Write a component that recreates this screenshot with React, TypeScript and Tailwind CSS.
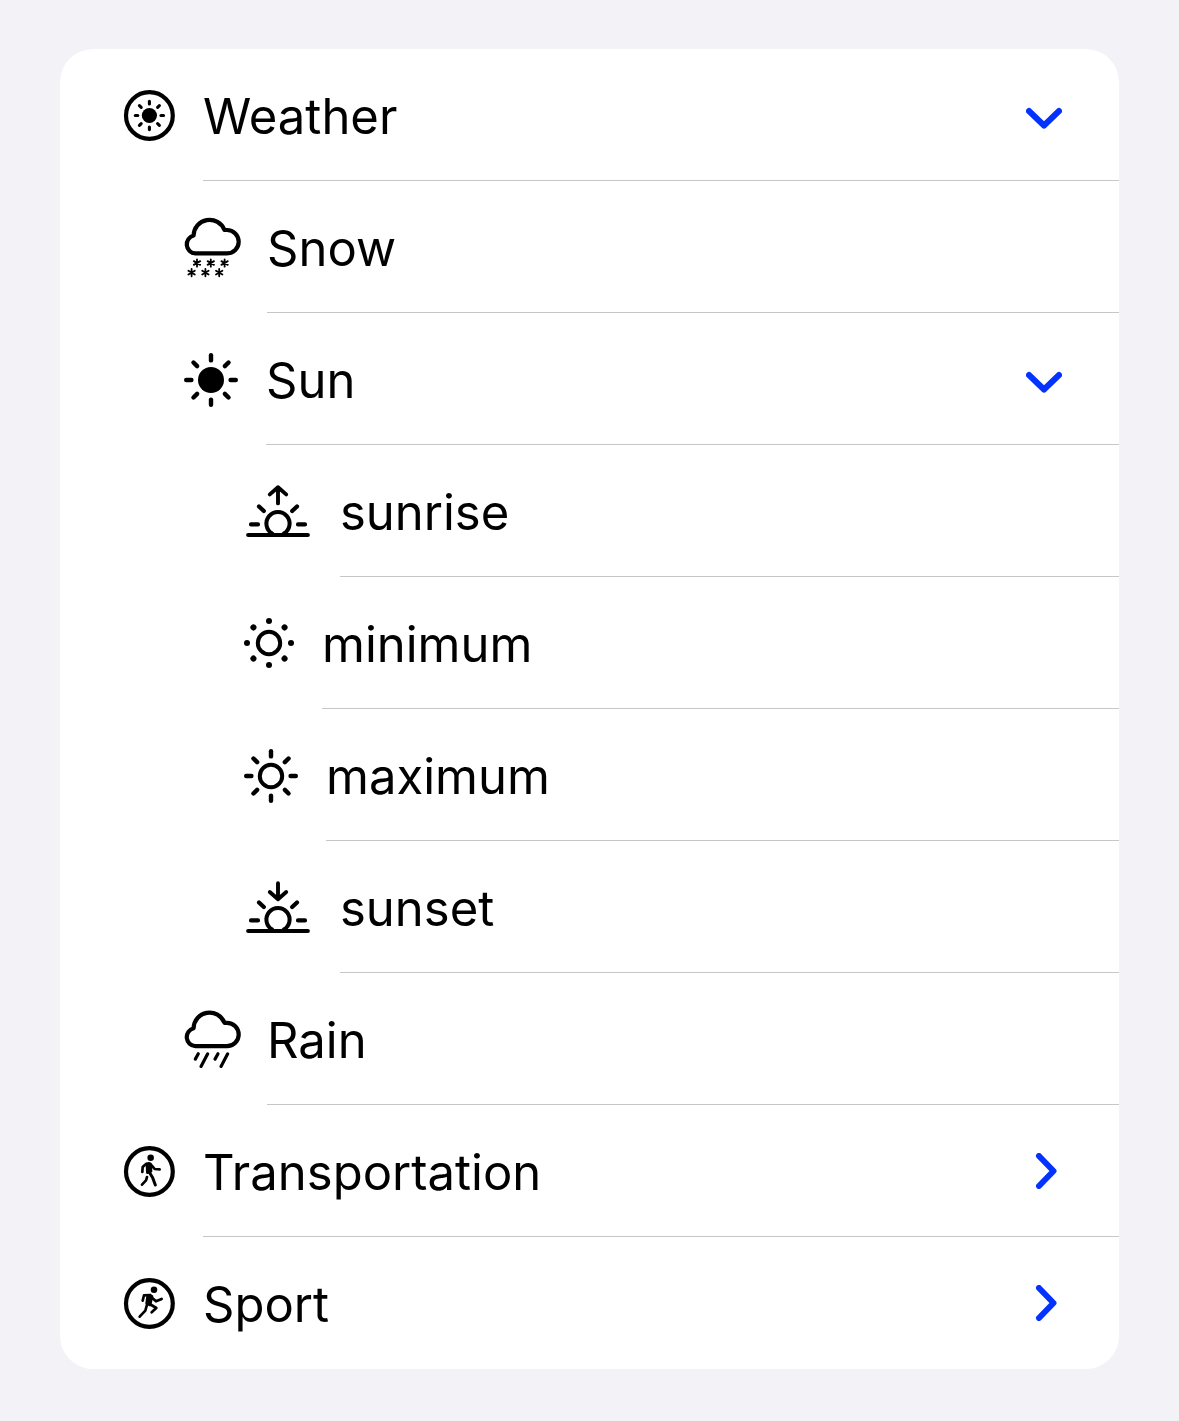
import { useState, type ReactNode } from "react";

type Node = {
  label: string;
  icon: ReactNode;
  open?: boolean;
  children?: Node[];
};

const SPOKES = [0, 45, 90, 135, 180, 225, 270, 315];

function Glyph({ className, width, children }: { className: string; width: number; children: ReactNode }) {
  return (
    <svg
      aria-hidden="true"
      viewBox={`0 0 ${width} 66`}
      className={`h-[66px] shrink-0 overflow-visible ${className}`}
      fill="none"
      stroke="black"
      strokeWidth={4.2}
      strokeLinecap="round"
      strokeLinejoin="round"
    >
      {children}
    </svg>
  );
}

function Rays({ cx, cy, from, to, width }: { cx: number; cy: number; from: number; to: number; width: number }) {
  return (
    <g strokeWidth={width}>
      {SPOKES.map((a) => (
        <path key={a} d={`M${cx} ${cy - from}V${cy - to}`} transform={`rotate(${a} ${cx} ${cy})`} />
      ))}
    </g>
  );
}

const CLOUD = "M11.4 39.2H43A11.7 11.7 0 0 0 43 15.8L40.5 15.8A16 16 0 0 0 9.6 21.3A9.1 9.1 0 0 0 11.4 39.2Z";

const FLAKES = [
  [13, 49],
  [26.8, 49],
  [40.6, 49],
  [7.6, 58.6],
  [21.4, 58.6],
  [35.2, 58.6],
];

function SunCircle() {
  return (
    <Glyph className="w-[51px]" width={51}>
      <circle cx="25.4" cy="33.5" r="23.4" />
      <circle cx="25.4" cy="33.5" r="7.6" fill="black" stroke="none" />
      <Rays cx={25.4} cy={33.5} from={11.6} to={14.1} width={3.1} />
    </Glyph>
  );
}

function CloudSnow() {
  return (
    <Glyph className="w-[55px]" width={55}>
      <path d={CLOUD} transform="translate(0 .2)" />
      <g strokeWidth={1.8}>
        {FLAKES.map(([x, y]) => (
          <path
            key={`${x}-${y}`}
            d="M0 -3.7V3.7M-3.2 -1.85L3.2 1.85M-3.2 1.85L3.2 -1.85"
            transform={`translate(${x} ${y})`}
          />
        ))}
      </g>
    </Glyph>
  );
}

function CloudRain() {
  return (
    <Glyph className="w-[55px]" width={55}>
      <path d={CLOUD} transform="translate(0 1)" />
      <path
        strokeWidth={3.2}
        d="M14.3 47.8L11.3 53.1M23.7 47.8L17 60.4M34 47.8L31 53.1M43.7 47.8L37 60.4"
      />
    </Glyph>
  );
}

function SunFilled() {
  return (
    <Glyph className="w-[54px]" width={54}>
      <circle cx="27" cy="34" r="13" fill="black" stroke="none" />
      <Rays cx={27} cy={34} from={19.6} to={24.8} width={4.4} />
    </Glyph>
  );
}

function SunMax() {
  return (
    <Glyph className="w-[54px]" width={54}>
      <circle cx="27" cy="34" r="11.2" strokeWidth={4} />
      <Rays cx={27} cy={34} from={19.6} to={24.8} width={4.4} />
    </Glyph>
  );
}

function SunMin() {
  return (
    <Glyph className="w-[50px]" width={50}>
      <circle cx="25" cy="33" r="11.2" strokeWidth={4} />
      {SPOKES.map((a) => (
        <circle key={a} cx="25" cy="11" r="3" fill="black" stroke="none" transform={`rotate(${a} 25 33)`} />
      ))}
    </Glyph>
  );
}

function Horizon({ arrow }: { arrow: string }) {
  return (
    <Glyph className="w-[68px]" width={68}>
      <path d="M4.2 57H63.8" />
      <path d="M28.2 55.6A11.6 11.6 0 1 1 39.8 55.6" strokeWidth={4} />
      <path d="M7 46.4H14M54 46.4H61M15 28.4L19.8 33M53 28.4L48.2 33" />
      <path d={arrow} strokeWidth={3.9} />
    </Glyph>
  );
}

function Walker() {
  return (
    <Glyph className="w-[51px]" width={51}>
      <circle cx="25.4" cy="33.5" r="23.4" />
      <g transform="translate(-9 2) scale(.3333)" strokeWidth={8}>
        <circle cx="107" cy="53" r="9.8" fill="black" stroke="none" />
        <path d="M96 71Q102 68 107 72L108 94L97 98Z" fill="black" />
        <path d="M93 72L83 81L82 96" />
        <path d="M110 76L119 87L134 88" />
        <path d="M104 98L113 113L121 135" strokeWidth={9} />
        <path d="M96 111L93 121L81 134" />
      </g>
    </Glyph>
  );
}

function Runner() {
  return (
    <Glyph className="w-[51px]" width={51}>
      <circle cx="25.4" cy="33.5" r="23.4" />
      <g transform="translate(-9 2) scale(.3333)" strokeWidth={8}>
        <circle cx="117" cy="53" r="9.8" fill="black" stroke="none" />
        <path d="M98 71L111 73L105 99L95 94Z" fill="black" />
        <path d="M106 69L87 70L83 86" />
        <path d="M111 77L123 88L140 81" />
        <path d="M104 96L124 108L110 121" />
        <path d="M96 98L91 116L74 134" />
      </g>
    </Glyph>
  );
}

const TREE: Node[] = [
  {
    label: "Weather",
    icon: <SunCircle />,
    open: true,
    children: [
      { label: "Snow", icon: <CloudSnow /> },
      {
        label: "Sun",
        icon: <SunFilled />,
        open: true,
        children: [
          { label: "sunrise", icon: <Horizon arrow="M34 25.4V9.2M25.8 16.4L34 9.2L42.2 16.4" /> },
          { label: "minimum", icon: <SunMin /> },
          { label: "maximum", icon: <SunMax /> },
          { label: "sunset", icon: <Horizon arrow="M34 9.2V25.2M25.8 18L34 25.2L42.2 18" /> },
        ],
      },
      { label: "Rain", icon: <CloudRain /> },
    ],
  },
  { label: "Transportation", icon: <Walker />, children: [] },
  { label: "Sport", icon: <Runner />, children: [] },
];

const INDENT = ["pl-[64px]", "pl-[124px]", "pl-[184px]"];

function Chevron({ open }: { open: boolean }) {
  return (
    <svg
      aria-hidden="true"
      viewBox="0 0 36 36"
      className="size-9"
      fill="none"
      stroke="currentColor"
      strokeWidth={6}
      strokeLinecap="round"
      strokeLinejoin="round"
    >
      <path d={open ? "M3 14L18 28.5L33 14" : "M13 3L27.5 18L13 33"} />
    </svg>
  );
}

function Row({ node, level, last }: { node: Node; level: number; last: boolean }) {
  const [open, setOpen] = useState(Boolean(node.open));
  return (
    <li>
      <div className={`flex h-[132px] items-center gap-7 ${INDENT[level]}`}>
        {node.icon}
        <div
          className={`flex h-full min-w-0 flex-1 items-center justify-between pr-[57px] ${
            last ? "" : "border-b border-[#c6c6c8]"
          }`}
        >
          <span className="pt-1 text-[49px] leading-[60px]">{node.label}</span>
          {node.children && (
            <button
              type="button"
              aria-label={`Toggle ${node.label}`}
              aria-expanded={open}
              onClick={() => setOpen(!open)}
              className="cursor-pointer text-[#0433ff]"
            >
              <Chevron open={open} />
            </button>
          )}
        </div>
      </div>
      {open && node.children && node.children.length > 0 && (
        <ul>
          {node.children.map((child) => (
            <Row key={child.label} node={child} level={level + 1} last={false} />
          ))}
        </ul>
      )}
    </li>
  );
}

export default function App() {
  return (
    <main className="min-h-screen bg-[#f2f2f7] px-[60px] py-[49px] font-['Inter',sans-serif] text-black">
      <ul className="overflow-hidden rounded-[33px] bg-white">
        {TREE.map((node, i) => (
          <Row key={node.label} node={node} level={0} last={i === TREE.length - 1} />
        ))}
      </ul>
    </main>
  );
}
